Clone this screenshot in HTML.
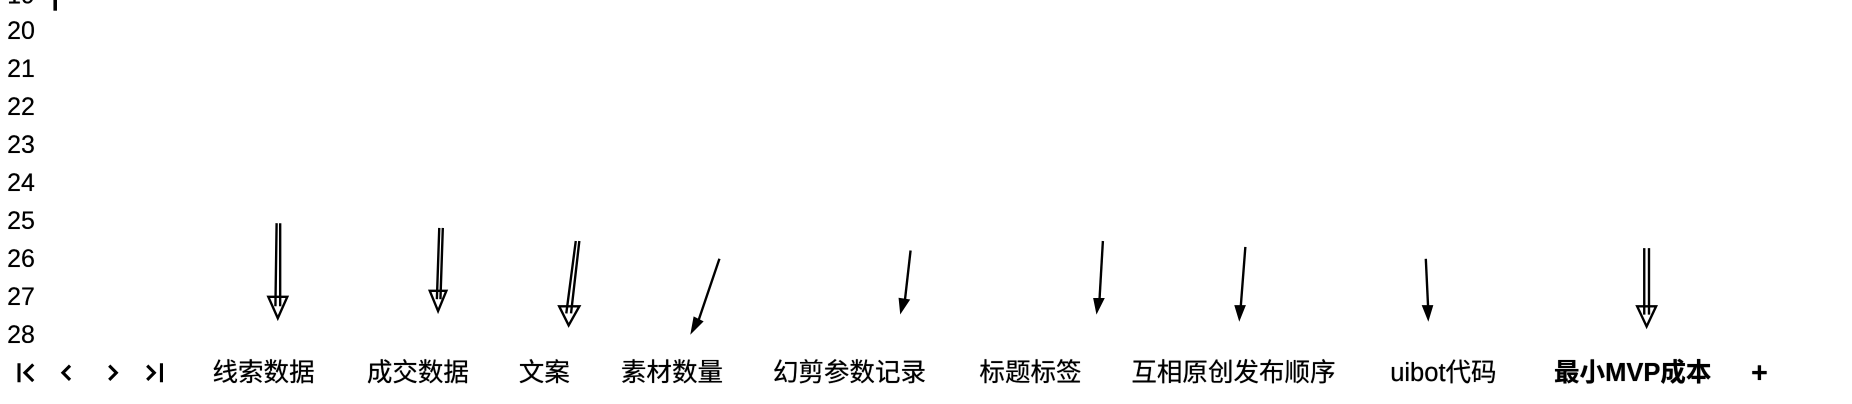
<!DOCTYPE html>
<html><head><meta charset="utf-8"><style>
html,body{margin:0;padding:0;background:#fff;overflow:hidden;width:1852px;height:404px}
#w{position:absolute;left:0;top:0;width:1560px;height:340px;transform:scale(1.18718);transform-origin:0 0;font-family:"Liberation Sans","Noto Sans CJK SC",sans-serif;color:#000}
.n{position:absolute;left:6px;font-size:21px;line-height:20px;text-shadow:0 0 .4px #000}
.t{position:absolute;top:302px;font-size:21.5px;line-height:24px;white-space:nowrap;text-shadow:0 0 .5px #000}
svg{position:absolute;left:0;top:0}
</style></head><body><div id="w">
<div class="n" style="top:-13px">19</div>
<div style="position:absolute;left:45px;top:0;width:3px;height:9px;background:#000"></div>
<div class="n" style="top:17px">20</div>
<div class="n" style="top:49px">21</div>
<div class="n" style="top:81px">22</div>
<div class="n" style="top:113px">23</div>
<div class="n" style="top:145px">24</div>
<div class="n" style="top:177px">25</div>
<div class="n" style="top:209px">26</div>
<div class="n" style="top:241px">27</div>
<div class="n" style="top:273px">28</div>
<div class="t" style="left:179px">线索数据</div>
<div class="t" style="left:309px">成交数据</div>
<div class="t" style="left:437px">文案</div>
<div class="t" style="left:523px">素材数量</div>
<div class="t" style="left:651px">幻剪参数记录</div>
<div class="t" style="left:825px">标题标签</div>
<div class="t" style="left:953px">互相原创发布顺序</div>
<div class="t" style="left:1171px">uibot代码</div>
<div class="t" style="left:1309px;font-weight:bold">最小MVP成本</div>
<div class="t" style="left:1475px;font-weight:bold;font-size:24px;top:303px">+</div>
<svg width="1560" height="340" viewBox="0 0 1560 340" fill="none" stroke="#000" stroke-width="2">
<g stroke-width="2.6">
<path d="M16 306 V322 M28 307 L21 314 L28 321"/>
<path d="M59 308 L53 314 L59 320"/>
<path d="M92 308 L98 314 L92 320"/>
<path d="M124 308 L130 314 L124 320 M136 306 V322"/>
</g>
<path d="M233 188 L232 258 M236 188 L236 258 M226 250 L234 268 L242 250 Z"/>
<path d="M370 192 L368 252 M373 192 L371 252 M362 245 L369 262 L376 245 Z"/>
<path d="M485 203 L477 264 M488 203 L481 264 M471 258 L479 274 L488 258 Z"/>
<path d="M606 218 L587 274" stroke-width="2"/><path d="M583 279 L585 268 L591 271 Z" fill="#000"/>
<path d="M767 211 L762 255"/><path d="M759 262 L758 252 L765 253 Z" fill="#000"/>
<path d="M929 203 L926 255"/><path d="M924 262 L922 252 L929 252 Z" fill="#000"/>
<path d="M1049 208 L1045 260"/><path d="M1044 268 L1041 258 L1048 258 Z" fill="#000"/>
<path d="M1201 218 L1203 260"/><path d="M1203 268 L1199 258 L1206 258 Z" fill="#000"/>
<path d="M1385 209 L1385 265 M1389 209 L1389 265 M1379 258 L1387 275 L1395 258 Z"/>
</svg>
</div></body></html>
